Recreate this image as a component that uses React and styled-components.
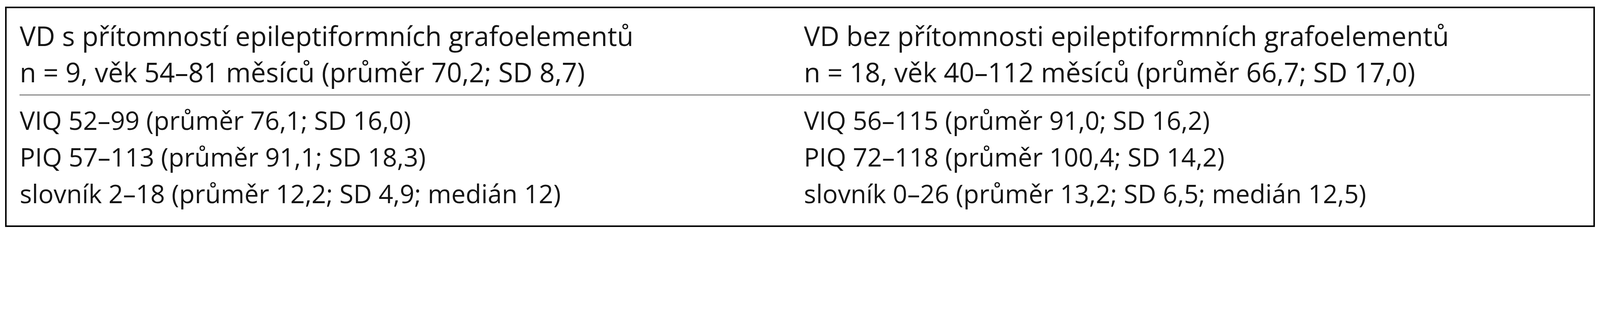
import React from "react";
import styled, { createGlobalStyle } from "styled-components";

/* 1rem = 100 px of the 5425 px wide picture, whatever the device pixel ratio */
const Global = createGlobalStyle`
  html {
    font-size: calc(100vw / 54.25);
  }
  html, body {
    margin: 0;
    padding: 0;
    background: #ffffff;
  }
  body {
    font-family: "Open Sans", "Noto Sans", "Liberation Sans", sans-serif;
    color: #141414;
    overflow: hidden;
  }
`;

const Page = styled.div`
  padding: 0.225rem 0 0 0.17rem;
`;

const Table = styled.div`
  box-sizing: border-box;
  width: 53.91rem;
  height: 7.48rem;
  border: 0.056rem solid #050505;
  padding: 0 0.11rem 0 0.445rem;
  display: flex;
  flex-direction: column;
`;

const Row = styled.div`
  display: grid;
  grid-template-columns: 26.59rem 1fr;
  padding: ${(p) => (p.$head ? "0.315rem 0 0.13rem" : "0.217rem 0 0")};
  border-bottom: ${(p) => (p.$head ? "0.05rem solid #8c8c8c" : "none")};
`;

const Cell = styled.div`
  display: flex;
  flex-direction: column;
  min-width: 0;
  font-size: ${(p) => (p.$head ? "0.91rem" : "0.865rem")};
  line-height: ${(p) => (p.$head ? "1.24rem" : "1.245rem")};
  white-space: nowrap;
`;

const Line = styled.span`
  display: block;
`;

const head = [
  [
    "VD s přítomností epileptiformních grafoelementů",
    "n = 9, věk 54–81 měsíců (průměr 70,2; SD 8,7)",
  ],
  [
    "VD bez přítomnosti epileptiformních grafoelementů",
    "n = 18, věk 40–112 měsíců (průměr 66,7; SD 17,0)",
  ],
];

const body = [
  [
    "VIQ 52–99 (průměr 76,1; SD 16,0)",
    "PIQ 57–113 (průměr 91,1; SD 18,3)",
    "slovník 2–18 (průměr 12,2; SD 4,9; medián 12)",
  ],
  [
    "VIQ 56–115 (průměr 91,0; SD 16,2)",
    "PIQ 72–118 (průměr 100,4; SD 14,2)",
    "slovník 0–26 (průměr 13,2; SD 6,5; medián 12,5)",
  ],
];

export default function App() {
  return (
    <>
      <Global />
      <Page>
        <Table>
          <Row $head>
            {head.map((col, i) => (
              <Cell $head key={i}>
                {col.map((t, j) => (
                  <Line key={j}>{t}</Line>
                ))}
              </Cell>
            ))}
          </Row>
          <Row>
            {body.map((col, i) => (
              <Cell key={i}>
                {col.map((t, j) => (
                  <Line key={j}>{t}</Line>
                ))}
              </Cell>
            ))}
          </Row>
        </Table>
      </Page>
    </>
  );
}
